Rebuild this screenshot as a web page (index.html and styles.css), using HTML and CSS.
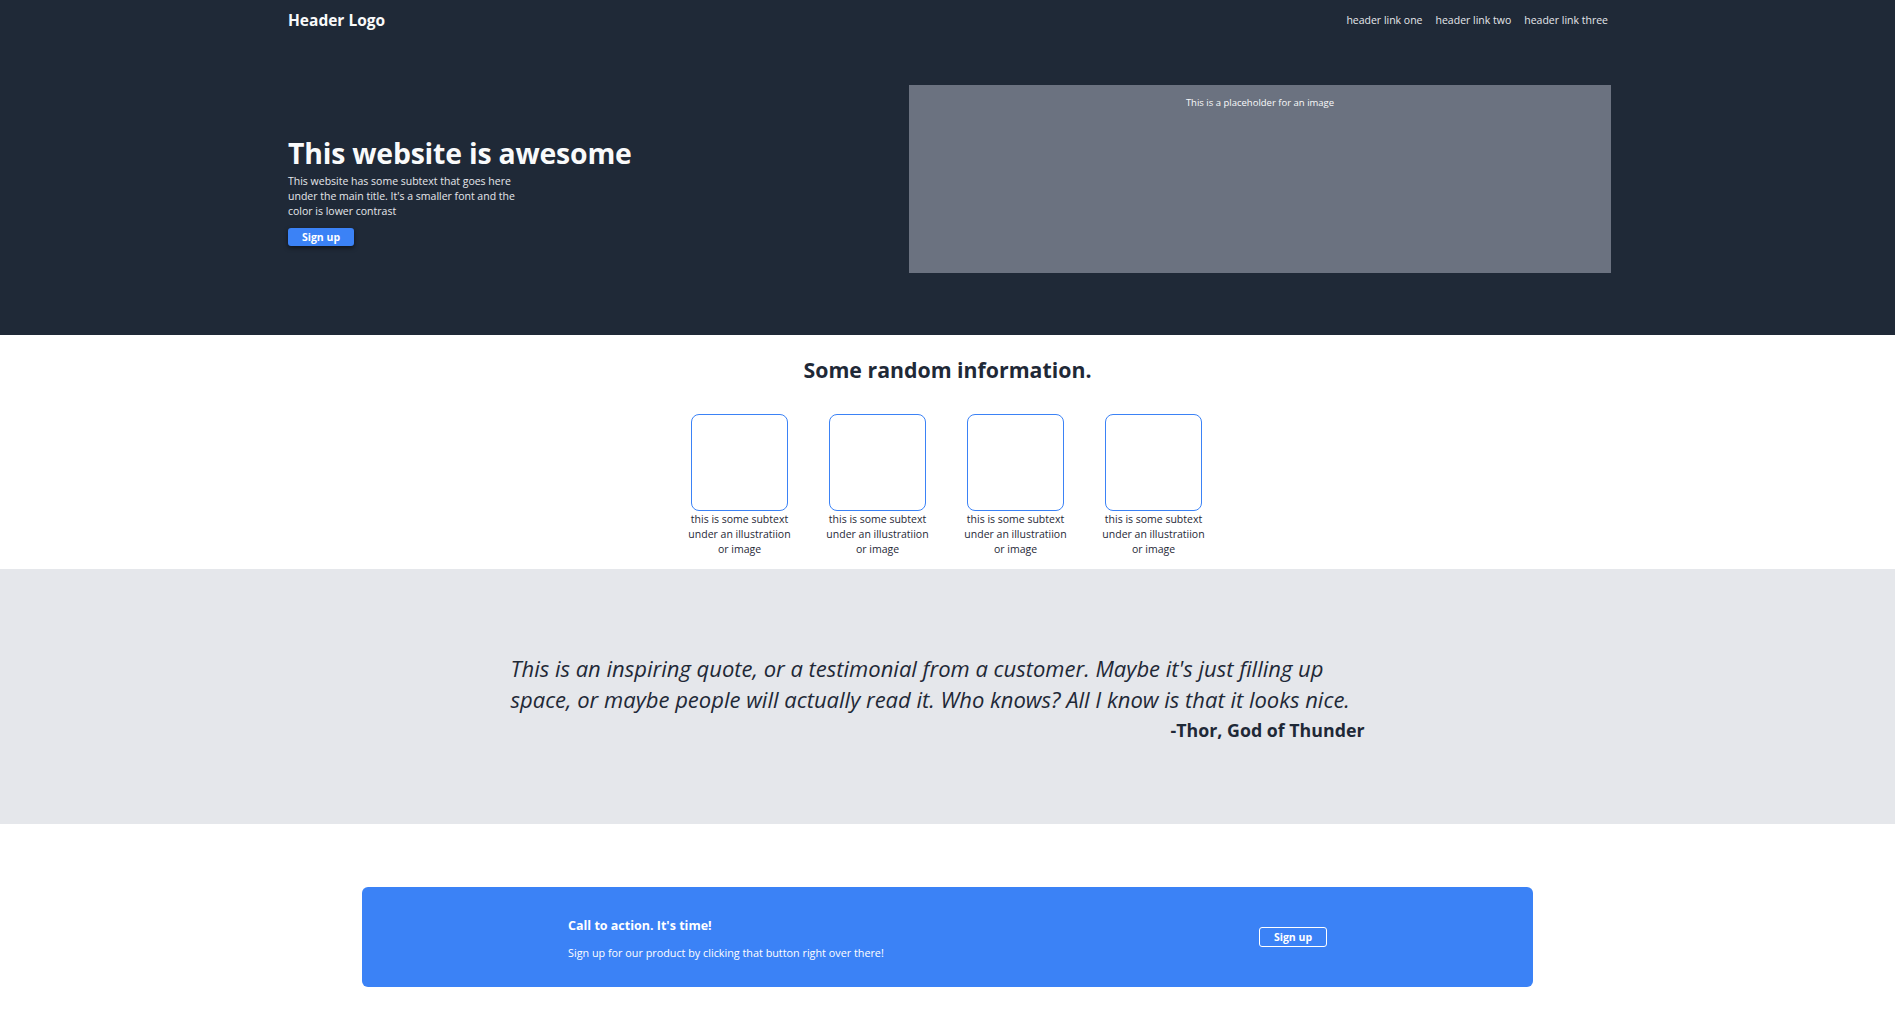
FILE: index.html
```html
<!DOCTYPE html>
<html lang="en">
<head>
<meta charset="utf-8">
<title>Landing page</title>
<link rel="stylesheet" href="styles.css">
</head>
<body>
<div class="top">
  <header class="container header">
    <div class="logo">Header Logo</div>
    <nav class="links">
      <a href="#">header link one</a>
      <a href="#">header link two</a>
      <a href="#">header link three</a>
    </nav>
  </header>
  <section class="container hero">
    <div class="hero-text">
      <h1>This website is awesome</h1>
      <p>This website has some subtext that goes here under the main title. It's a smaller font and the color is lower contrast</p>
      <button class="btn">Sign up</button>
    </div>
    <div class="placeholder">This is a placeholder for an image</div>
  </section>
</div>

<section class="info">
  <h2>Some random information.</h2>
  <div class="items">
    <div class="item"><div class="box"></div><p>this is some subtext under an illustratiion or image</p></div>
    <div class="item"><div class="box"></div><p>this is some subtext under an illustratiion or image</p></div>
    <div class="item"><div class="box"></div><p>this is some subtext under an illustratiion or image</p></div>
    <div class="item"><div class="box"></div><p>this is some subtext under an illustratiion or image</p></div>
  </div>
</section>

<section class="quote-band">
  <div class="quote">
    <p class="quote-text">This is an inspiring quote, or a testimonial from a customer. Maybe it's just filling up space, or maybe people will actually read it. Who knows? All I know is that it looks nice.</p>
    <p class="author">-Thor, God of Thunder</p>
  </div>
</section>

<section class="cta-wrap">
  <div class="cta">
    <div class="cta-text">
      <h3>Call to action. It's time!</h3>
      <p>Sign up for our product by clicking that button right over there!</p>
    </div>
    <button class="btn-outline">Sign up</button>
  </div>
</section>
</body>
</html>
```

FILE: styles.css
```css
* { box-sizing: border-box; }
html, body { margin: 0; padding: 0; }
body {
  font-family: "Open Sans", "Noto Sans", sans-serif;
  color: #1f2937;
  background: #fff;
}
.top { background: #1f2937; height: 335px; }
.container { width: 1327px; margin: 0 auto; }
.header {
  display: flex;
  justify-content: space-between;
  align-items: center;
  height: 36px;
  padding: 4px 0 0 4px;
}
.logo { color: #f9fafb; font-weight: 700; font-size: 15.5px; }
.links { display: flex; gap: 13px; padding-right: 3px; }
.links a { color: #e5e7eb; text-decoration: none; font-size: 10.5px; }
.hero {
  display: flex;
  justify-content: space-between;
  align-items: flex-start;
  padding-top: 49px;
}
.hero-text { padding-left: 4px; padding-top: 51px; }
.hero h1 {
  margin: 0 0 4px;
  color: #f9fafb;
  font-size: 28.4px;
  line-height: 34px;
  font-weight: 700;
  letter-spacing: -0.2px;
}
.hero p {
  margin: 0;
  width: 240px;
  color: #e5e7eb;
  font-size: 10.5px;
  line-height: 15px;
}
.btn {
  margin-top: 9px;
  width: 66px;
  height: 18px;
  padding: 0;
  border: none;
  border-radius: 3px;
  background: #3b82f6;
  color: #fff;
  font-family: inherit;
  font-weight: 700;
  font-size: 10.5px;
  box-shadow: 0 2px 4px rgba(0,0,0,0.5);
}
.placeholder {
  width: 702px;
  height: 188px;
  background: #6b7280;
  color: #f9fafb;
  font-size: 9.5px;
  text-align: center;
  padding-top: 11px;
}
.info { height: 234px; padding-top: 19px; }
.info h2 {
  margin: 0;
  text-align: center;
  font-size: 21.3px;
  line-height: 32px;
  font-weight: 700;
  color: #1f2937;
}
.items {
  display: flex;
  justify-content: center;
  gap: 32px;
  margin-top: 28px;
  padding-right: 2px;
}
.item { width: 106px; display: flex; flex-direction: column; align-items: center; }
.box {
  width: 97px;
  height: 97px;
  border: 1.3px solid #3b82f6;
  border-radius: 8px;
}
.item p {
  margin: 1px 0 0;
  text-align: center;
  font-size: 10.5px;
  line-height: 15px;
  color: #1f2937;
}
.quote-band { background: #e5e7eb; height: 255px; padding-top: 84px; }
.quote { width: 874px; margin: 0 auto; padding-right: 20px; }
.quote-text {
  margin: 0;
  max-width: 848px;
  font-style: italic;
  font-size: 22px;
  line-height: 31px;
  color: #1f2937;
}
.author {
  margin: 0;
  text-align: right;
  font-weight: 700;
  font-size: 17.8px;
  line-height: 30px;
  color: #1f2937;
}
.cta-wrap { padding: 63px 0 40px; }
.cta {
  width: 1171px;
  height: 100px;
  margin: 0 auto;
  background: #3b82f6;
  border-radius: 6px;
  display: flex;
  justify-content: space-between;
  align-items: center;
  padding: 0 206px 0 206px;
  color: #fff;
}
.cta-text { padding-top: 3px; }
.cta h3 { margin: 0 0 11px; font-size: 12.5px; font-weight: 700; }
.cta p { margin: 0; font-size: 10.8px; }
.btn-outline {
  width: 68px;
  height: 20px;
  padding: 0;
  background: transparent;
  border: 1px solid #fff;
  border-radius: 3px;
  color: #fff;
  font-family: inherit;
  font-weight: 700;
  font-size: 10.5px;
}
```
